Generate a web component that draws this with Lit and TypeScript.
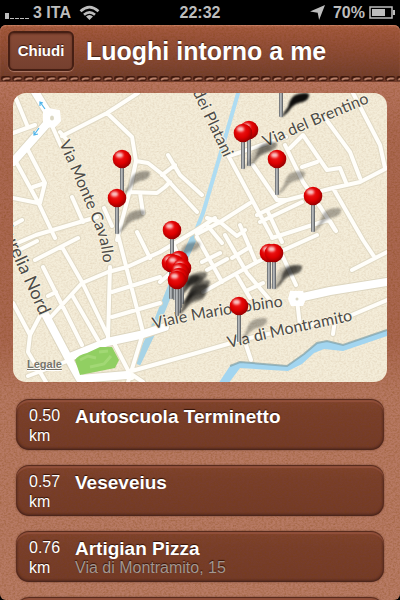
import { LitElement, html, svg, css } from "lit";
import { customElement, property } from "lit/decorators.js";

interface Place {
  distance: string;
  name: string;
  address?: string;
}

const PLACES: Place[] = [
  { distance: "0.50 km", name: "Autoscuola Terminetto" },
  { distance: "0.57 km", name: "Veseveius" },
  { distance: "0.76 km", name: "Artigian Pizza", address: "Via di Montramito, 15" },
  { distance: "", name: "" },
];

// Side streets, as polylines on the map canvas.
const STREETS = [
  "M60 132 67 140M62 136 107 113 138 93",
  "M107 113 132 137 136 161 130 190 117 240",
  "M136 161 148 163 162 174 197 212",
  "M168 155 180 175 202 195M162 175 175 165",
  "M129 192 157 193 165 187 170 182M140 193 143 213",
  "M72 197 83 222M104 208 112 226M15 96 27 125M13 133 35 125",
  "M27 148 45 183 40 203M33 187 45 183M15 160 38 202 55 238M13 198 38 203",
  "M13 225 22 220 M13 245 36 235 97 217M53 128 61 146",
  "M35 260 78 238M13 253 37 241M62 247 82 282 108 336",
  "M43 267 82 345M48 296 56 292M50 318 82 283 108 272 127 267 160 252 200 228",
  "M72 295 98 340M110 267 108 338M118 235 143 332M137 232 150 258",
  "M112 292 160 277M112 317 160 303M13 303 30 335 28 352 46 382M30 335 42 312M28 376 70 360",
  "M128 372 200 352 245 339 300 327 340 320 387 300M335 320 333 334M245 342 251 360M297 300 300 326",
  "M128 372 143 382M143 333 128 382M114 343 132 378",
  "M229 156 286 137M228 155 272 237M253 165 277 200 287 200",
  "M285 145 303 182 321 208 335 230M290 148 303 135 327 170 340 168 347 185M302 167 317 162",
  "M325 118 350 152 360 178M353 93 380 145 385 168",
  "M257 215 287 200 333 188 360 182 387 168M333 188 363 240 375 258M352 270 387 252",
  "M197 234 220 222 250 203M207 218 220 222 237 236 245 230M207 225 222 243",
  "M260 222 302 202M268 212 282 242M272 238 328 220M330 221 336 231",
  "M197 237 222 282M225 235 247 273 270 300M203 292 257 262 317 235M237 276 250 298M248 290 263 283",
  "M202 262 220 253M207 270 227 259M232 258 250 247M282 255 296 285M240 225 255 260",
  "M160 282 186 260M200 228 215 218M166 226 180 260",
];

const AVENUES = [
  "M34 90 45 108 52 118M52 118 13 162",
  "M44 312 72 365 80 379 127 375",
  "M70 357 107 342 140 335 165 327",
  "M294 299 330 291 387 282",
];

// [head x, head y, shadow strength]
const PINS: [number, number, number][] = [
  [281, 81, 0.95],
  [249, 130, 0.4],
  [243, 133, 0.2],
  [122, 159, 0.35],
  [277, 159, 0.3],
  [313, 196, 0.3],
  [117, 198, 0.35],
  [172, 230, 0.3],
  [269, 253, 0.2],
  [274, 253, 0.6],
  [179, 260, 0.5],
  [171, 263, 0.4],
  [175, 264, 0.4],
  [182, 268, 0.5],
  [180, 272, 0.5],
  [179, 277, 0.4],
  [177, 280, 0.4],
  [239, 306, 0.3],
];

// Fine fractal grain laid over a surface to give it a leather or paper feel.
const grain = (id: string) => html`
  <svg class="grain" aria-hidden="true">
    <filter id=${id} x="0" y="0" width="100%" height="100%">
      <feTurbulence type="fractalNoise" baseFrequency="0.45 0.6" numOctaves="3" seed="4" />
      <feColorMatrix values="0 0 0 0 0.2  0 0 0 0 0.05  0 0 0 0 0  1.6 0 0 0 -0.6" />
    </filter>
    <rect width="100%" height="100%" filter="url(#${id})" />
  </svg>
`;

const grainStyles = css`
  .grain {
    position: absolute;
    inset: 0;
    width: 100%;
    height: 100%;
    pointer-events: none;
    opacity: 0.4;
  }
`;

@customElement("status-bar")
export class StatusBar extends LitElement {
  static styles = css`
    :host {
      display: grid;
      grid-template-columns: 1fr auto 1fr;
      align-items: center;
      height: 25px;
      padding: 0 4px;
      background: #000;
      color: #bdbdbd;
      font-size: 16px;
      font-weight: bold;
      line-height: 25px;
    }
    .group {
      display: flex;
      align-items: center;
      gap: 4px;
    }
    .end {
      justify-content: flex-end;
    }
    .wifi {
      margin-left: 4px;
    }
    .arrow {
      margin-right: 4px;
    }
    svg {
      display: block;
      fill: currentColor;
    }
  `;

  render() {
    return html`
      <div class="group">
        <svg width="25" height="14" viewBox="0 0 25 14">
          <path d="M1 7h4v6H1zM6 12h4v1H6zM11 12h4v1h-4zM16 12h4v1h-4zM21 12h4v1h-4z" />
        </svg>
        <span>3 ITA</span>
        <svg class="wifi" width="21" height="16" viewBox="0 0 21 16">
          <g fill="none" stroke="currentColor" stroke-width="2.6">
            <path d="M1.5 6.2Q10.5-2 19.5 6.2" />
            <path d="M5 9.8Q10.5 4.8 16 9.8" />
          </g>
          <path d="M10.5 15 7 11.6q3.500-3 7 0z" />
        </svg>
      </div>
      <span>22:32</span>
      <div class="group end">
        <svg class="arrow" width="15" height="15" viewBox="0 0 14 14">
          <path d="M14 0 8.500 14 7.200 7.200 0 6z" />
        </svg>
        <span>70%</span>
        <svg width="27" height="13" viewBox="0 0 27 13">
          <path fill="none" stroke="currentColor" stroke-width="1.500" d="M1 1h22v11H1z" />
          <path d="M3 3h13v7H3zM24 4h2v5h-2z" />
        </svg>
      </div>
    `;
  }
}

@customElement("nav-header")
export class NavHeader extends LitElement {
  static styles = [
    grainStyles,
    css`
      :host {
        display: block;
        background: #000;
      }
      .bar {
        position: relative;
        display: flex;
        align-items: center;
        gap: 12px;
        height: 51px;
        padding: 0 8px;
        border-radius: 6px 6px 0 0;
        overflow: hidden;
        background: linear-gradient(#b0644a, #a2583f 8%, #8c4b37 55%, #733f2f);
        box-shadow: inset 0 1px 1px #c98268;
      }
      button {
        position: relative;
        width: 66px;
        height: 40px;
        padding: 0;
        border: 2px solid #461f14;
        border-radius: 6px;
        background: linear-gradient(#874a36, #75402f);
        box-shadow: 0 1px 1px #b07a66, inset 0 1px 2px #5a2c1e;
        color: #fff;
        font: bold 15px "Liberation Sans", Arial, sans-serif;
        text-shadow: 0 -1px 1px #3b1a10;
      }
      h1 {
        position: relative;
        margin: 0;
        color: #fff;
        font-size: 25px;
        line-height: 32px;
        white-space: nowrap;
        text-shadow: 0 -1px 1px #3f2015;
      }
      .stitch {
        display: block;
        width: 100%;
        height: 6px;
        background: #7b4433;
      }
    `,
  ];

  render() {
    return html`
      <header>
        <div class="bar">
          ${grain("bar-grain")}
          <button type="button">Chiudi</button>
          <h1>Luoghi intorno a me</h1>
        </div>
        <svg class="stitch" aria-hidden="true">
          <pattern id="thread" width="11.300" height="6" patternUnits="userSpaceOnUse">
            <rect width="12" height="6" fill="#733d2c" />
            <rect x="1" y="0" width="10" height="5" rx="2" fill="#40190d" />
            <path d="M3.500 3.500Q4 2.500 6 2.500H9" fill="none" stroke="#b98069" stroke-width="2" stroke-linecap="round" />
          </pattern>
          <rect width="100%" height="6" fill="url(#thread)" />
        </svg>
      </header>
    `;
  }
}

@customElement("places-map")
export class PlacesMap extends LitElement {
  static styles = [
    grainStyles,
    css`
      :host {
        position: relative;
        display: block;
        border-radius: 13px;
        overflow: hidden;
        background: #f4edd9;
      }
      .canvas {
        display: block;
        position: relative;
        width: 100%;
        height: auto;
      }
      .grain {
        opacity: 0.12;
      }
      .street-edge,
      .street,
      .avenue-edge,
      .avenue {
        fill: none;
        stroke-linecap: round;
        stroke-linejoin: round;
      }
      .street-edge {
        stroke: #e0d9c4;
        stroke-width: 6;
      }
      .street {
        stroke: #fffefa;
        stroke-width: 4;
      }
      .avenue-edge {
        stroke: #ddd6c0;
        stroke-width: 10;
      }
      .avenue {
        stroke: #fff;
        stroke-width: 8;
      }
      .road-name {
        font-family: Lato, "Open Sans", sans-serif;
        font-size: 16px;
        fill: #4d4b47;
        stroke: #f8f2e0;
        stroke-width: 2;
        stroke-linejoin: round;
        paint-order: stroke;
      }
      .major {
        font-size: 18px;
      }
      .legal {
        position: absolute;
        left: 14px;
        bottom: 11px;
        color: #77746a;
        font-size: 11px;
        font-weight: bold;
        line-height: 13px;
        text-shadow: 0 1px 0 #fff;
      }
    `,
  ];

  private pin([x, y, shade]: [number, number, number]) {
    return svg`
      <g transform="translate(${x} ${y})">
        <path d="M0 36 7 26Q9 15 17 13 25 11 28 13 29 18 22 21 15 22 11 26 7 32 1 36z"
          fill="#000" opacity=${shade} filter="url(#soft)" />
        <rect x="-2" y="7" width="4" height="29" rx="1" fill="url(#steel)" />
        <circle r="9.300" fill="url(#ball)" />
        <ellipse cx="-2.500" cy="-4" rx="3.600" ry="2.600" fill="#fff" opacity="0.75" filter="url(#glint)" />
      </g>
    `;
  }

  private roadName(id: string, d: string, label: string, anchor = "start", size = "") {
    return svg`
      <path id=${id} d=${d} fill="none" />
      <text class="road-name ${size}" text-anchor=${anchor}>
        <textPath href="#${id}" startOffset=${anchor === "end" ? "100%" : "0"}>${label}</textPath>
      </text>
    `;
  }

  render() {
    const streets = STREETS.join("");
    const avenues = AVENUES.join("");
    return html`
      ${grain("paper-grain")}
      <svg class="canvas" viewBox="13 93 374 289" role="img" aria-label="Mappa dei luoghi">
        <defs>
          <radialGradient id="ball" cx="0.42" cy="0.38" r="0.62">
            <stop offset="0" stop-color="#f21a1a" />
            <stop offset="0.6" stop-color="#dd0000" />
            <stop offset="1" stop-color="#960000" />
          </radialGradient>
          <linearGradient id="steel">
            <stop offset="0" stop-color="#5c5f62" />
            <stop offset="0.45" stop-color="#c3c6c8" />
            <stop offset="1" stop-color="#505356" />
          </linearGradient>
          <filter id="soft" x="-30%" y="-30%" width="160%" height="160%">
            <feGaussianBlur stdDeviation="1.300" />
          </filter>
          <filter id="glint" x="-50%" y="-50%" width="200%" height="200%">
            <feGaussianBlur stdDeviation="0.900" />
          </filter>
        </defs>

        <path d="M239 90 221 152 203 213 190 245" fill="none" stroke="#aedcf2" stroke-width="4" />
        <path d="M195 235 170 290 157 322 137 364" fill="none" stroke="#a6d3e6" stroke-width="7" />
        <path class="street-edge" d=${streets} />
        <path class="avenue-edge" d=${avenues} />
        <path class="street" d=${streets} />
        <path class="avenue" d=${avenues} />

        <path d="M44 108 59 111 60 121 54 127 44 126z" fill="#fff" stroke="#fff" stroke-width="2" />
        <ellipse cx="52" cy="118" rx="2" ry="2.500" fill="#dcd8c4" />
        <g fill="none" stroke="#4fb4ea" stroke-width="1.200">
          <path d="M45 109 40 102M40 106v-4l3 1" />
          <path d="M39 128 34 135M34 131v4l4-1" />
        </g>
        <path d="M290 291 303 291 306 299 303 306 291 306 288 299z" fill="#fff" />
        <circle cx="297" cy="299" r="1.500" fill="#dcd8c4" />

        <path d="M75 360Q78 355 87 353L100 347 112 347 119 360 115 368 100 371 80 375z" fill="#91cf62" />
        <path d="M80 360 88 356 96 358M90 367 104 364 111 356M99 352 108 351" fill="none"
          stroke="#a9dc7e" stroke-width="3" opacity="0.700" />

        <path d="M218 384 230 366 240 362 287 366 304 354 317 343 327 341 343 345 387 330V336L343 351 324 349 314 353 302 364 288 371 240 368 228 384z"
          fill="#a2d5f0" />
        <path d="M230 366 240 362 287 366 304 354 317 343 327 341 343 345 387 330" fill="none"
          stroke="#7f9fa8" stroke-width="2" opacity="0.700" />

        ${this.roadName("monte", "M59 143 83 198 97 232Q103 247 104 280", "Via Monte Cavallo")}
        ${this.roadName("platani", "M176 58 224 158", "Via dei Platani", "end")}
        ${this.roadName("brentino", "M266 147Q310 127 390 94", "Via del Brentino")}
        ${this.roadName("aurelia", "M-20 184 40 316", "Via Aurelia Nord", "end", "major")}
        ${this.roadName("tobino", "M154 329Q205 316 310 303", "Viale Mario Tobino")}
        ${this.roadName("montramito", "M229 348Q290 333 380 315", "Via di Montramito")}

        ${PINS.map((p) => this.pin(p))}
      </svg>
      <a class="legal" href="#legale">Legale</a>
    `;
  }
}

@customElement("place-list")
export class PlaceList extends LitElement {
  @property({ attribute: false }) places: Place[] = [];

  static styles = [
    grainStyles,
    css`
      ul {
        display: flex;
        flex-direction: column;
        gap: 15px;
        margin: 0;
        padding: 0;
        list-style: none;
      }
      .card {
        position: relative;
        display: grid;
        grid-template-columns: 40px 1fr;
        column-gap: 6px;
        box-sizing: border-box;
        min-height: 51px;
        padding: 7px 12px 4px 13px;
        border-radius: 13px;
        overflow: hidden;
        background: linear-gradient(#80442f, #793f2d 30%, #733b2a);
        box-shadow: 0 0 2px #6a3d2e;
        color: #fff;
        text-shadow: 0 -1px 1px #301208;
      }
      .card::after {
        content: "";
        position: absolute;
        inset: 0;
        border-radius: inherit;
        box-shadow: inset 0 1px 1px #52281b, inset 0 3px 1px #94523c,
          inset 0 -1px 3px #43211a, inset 0 0 3px #43211a;
        pointer-events: none;
      }
      .distance,
      .details {
        position: relative;
      }
      .distance {
        font-size: 16px;
        line-height: 20px;
      }
      h2 {
        margin: 0;
        font-size: 19px;
        line-height: 21px;
      }
      p {
        margin: 0;
        color: #a39791;
        font-size: 16px;
        line-height: 17px;
      }
    `,
  ];

  render() {
    return html`
      <ul>
        ${this.places.map(
          (place, i) => html`
            <li class="card">
              ${grain(`card-grain-${i}`)}
              <span class="distance">${place.distance}</span>
              <div class="details">
                ${place.name ? html`<h2>${place.name}</h2>` : null}
                ${place.address ? html`<p>${place.address}</p>` : null}
              </div>
            </li>
          `
        )}
      </ul>
    `;
  }
}

@customElement("app-root")
export class AppRoot extends LitElement {
  static styles = [
    grainStyles,
    css`
      :host {
        display: flex;
        flex-direction: column;
        height: 100vh;
        overflow: hidden;
        background: #000;
        font-family: "Liberation Sans", Arial, Helvetica, sans-serif;
      }
      main {
        position: relative;
        flex: 1;
        min-height: 0;
        overflow: hidden;
        border-radius: 0 0 6px 6px;
        background: linear-gradient(#b87560, #ab6852 10%, #a96650 50%, #b67862 60%, #b87b65);
      }
      .content {
        position: relative;
        display: flex;
        flex-direction: column;
        gap: 17px;
        padding: 11px 13px 0;
      }
      place-list {
        padding: 0 3px;
      }
    `,
  ];

  render() {
    return html`
      <status-bar></status-bar>
      <nav-header></nav-header>
      <main>
        ${grain("page-grain")}
        <div class="content">
          <places-map></places-map>
          <place-list .places=${PLACES}></place-list>
        </div>
      </main>
    `;
  }
}
